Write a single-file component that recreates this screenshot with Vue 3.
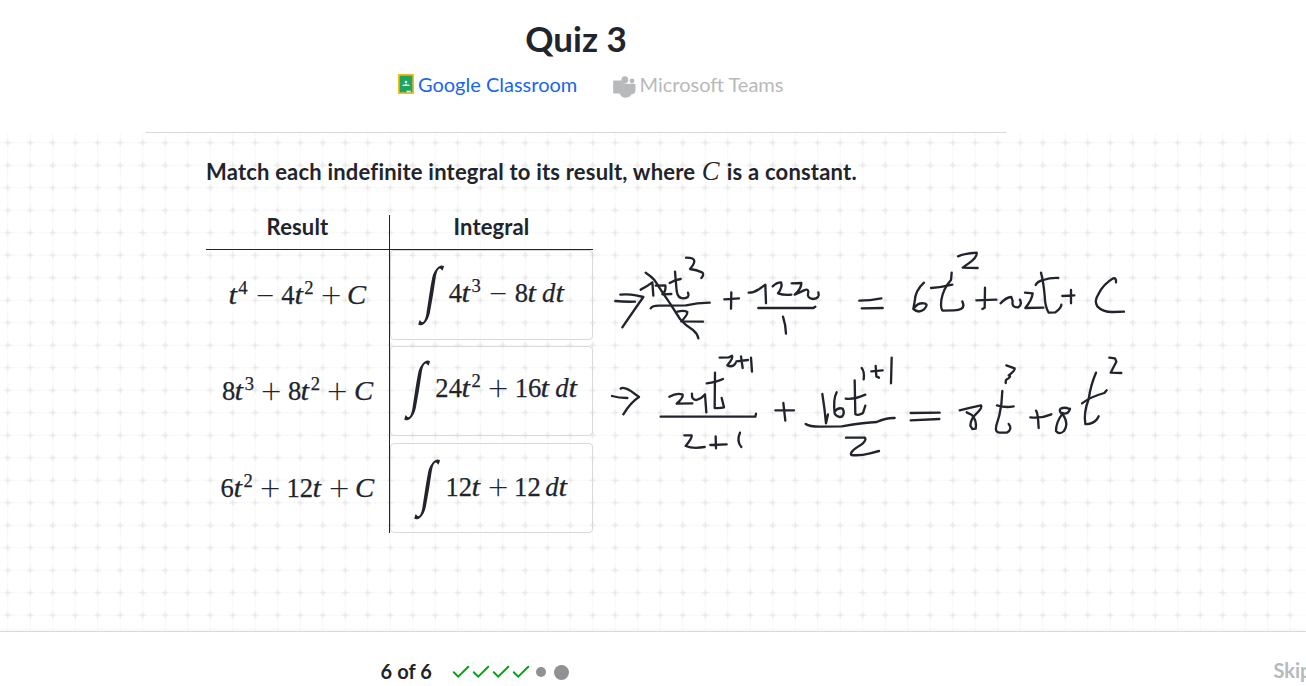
<script setup>
const n = (v) => ({ k: 'num', v })
const t = { k: 'var', v: 't' }
const d = { k: 'dee', v: 'd' }
const c = { k: 'cee', v: 'C' }
const s = (v) => ({ k: 'sup', v })
const plus = { k: 'op', v: '+' }
const minus = { k: 'op', v: '−' }
const thin = { k: 'thin', v: '' }
const int = { k: 'int', v: '∫' }

const results = [
  [t, s('4'), minus, n('4'), t, s('2'), plus, c],
  [n('8'), t, s('3'), plus, n('8'), t, s('2'), plus, c],
  [n('6'), t, s('2'), plus, n('12'), t, plus, c],
]
const integrals = [
  [int, n('4'), t, s('3'), minus, n('8'), t, thin, d, t],
  [int, n('24'), t, s('2'), plus, n('16'), t, thin, d, t],
  [int, n('12'), t, plus, n('12'), thin, d, t],
]

// Pen strokes, grouped by the area of the scratchpad they were drawn in
const ink = [
  {
    x: 600, y: 108,
    strokes: [
      'M61 164Q85 162 108 166L130 171Q104 208 67 262', 'M46 183Q75 186 105 185',
      'M122 149Q140 140 157 127L160 167', 'M137 98Q154 109 164 121Q188 159 210 190L240 237Q258 258 280 271Q293 282 295 295',
      'M167 137L196 136Q199 153 187 163L214 162', 'M225 95L230 153Q233 175 250 175Q271 174 264 158', 'M209 129Q225 119 242 117',
      'M258 53Q282 53 283 63Q282 74 270 87Q290 90 306 97Q314 102 304 114', 'M152 205Q158 196 180 197L258 196Q291 188 329 188',
      'M232 215Q252 210 262 216Q263 225 244 244L309 245', 'M394 157L393 206M373 178L417 175',
      'M446 158Q462 158 478 147L496 134L498 190', 'M518 139Q530 127 543 127Q549 141 534 160Q550 166 574 164',
      'M575 130L604 129Q605 145 584 164L612 151Q625 145 625 156Q619 175 639 177Q661 175 655 157', 'M475 204L640 204L646 200', 'M549 230Q557 254 558 281',
    ],
  },
  {
    x: 840, y: 108,
    strokes: [
      'M58 182Q90 182 124 175M65 205L128 204', 'M252 128Q226 151 224 184L220 207Q236 221 252 208Q268 192 251 190Q234 188 222 204',
      'M354 49Q371 41 410 38Q412 51 389 68L368 83L413 84', 'M335 98L333 120Q310 145 304 180Q301 209 309 212L342 211Q372 210 370 194L367 184', 'M273 144Q305 142 337 134',
      'M435 143L434 203L427 207M409 181L469 179', 'M482 190Q498 172 514 171L518 183Q514 203 535 202Q547 194 540 179', 'M555 158L578 160Q576 179 556 204L610 203',
      'M603 98Q610 124 614 166Q615 201 626 218L646 217Q664 203 664 194', 'M587 135Q591 125 610 120Q630 113 655 114', 'M693 150L693 190M667 168L703 166',
      'M828 127Q829 113 820 115Q790 132 775 163Q762 182 772 199Q789 217 820 216L852 215',
    ],
  },
  {
    x: 600, y: 213,
    strokes: [
      'M36 153Q55 159 82 159M62 131Q69 125 91 137L117 156Q92 172 70 208', 'M208 155Q232 142 248 149Q250 158 230 176L277 175', 'M276 146Q274 165 289 165Q306 160 315 148L319 202',
      'M345 83L344 189Q362 190 372 187L365 159', 'M320 115Q350 111 369 102', 'M359 38L387 37L396 32Q401 39 382 61Q398 69 407 54', 'M423 34L428 69M409 49L444 45M453 38L456 80',
      'M182 215L466 215L468 206', 'M253 271L275 271Q277 279 257 303Q278 312 314 306', 'M347 274L348 310M331 300L380 298', 'M420 263Q409 288 424 306',
      'M550 174L556 227M526 196L582 196', 'M667 147Q674 190 678 235L684 208', 'M710 142Q699 163 704 206Q714 220 727 214Q735 203 728 191Q714 186 704 200', 'M764 106L766 208Q775 213 789 204L796 182', 'M737 161Q764 164 796 149',
      'M785 69Q794 79 791 103M827 63L829 94L837 98M814 79L848 76M875 38L873 115', 'M617 237Q628 245 660 245L725 244Q797 232 830 231Q859 218 884 219', 'M738 278L795 278Q801 287 781 301Q747 321 754 330Q780 333 810 325L837 318',
    ],
  },
  {
    x: 890, y: 213,
    strokes: [
      'M62 204L149 203M62 226L148 222', 'M209 196Q240 188 273 181Q279 188 257 208Q242 222 241 242L247 252L257 251Q262 230 246 210L230 202', 'M349 61L374 70Q376 76 356 91Q367 94 348 105L347 114',
      'M337 138L334 178Q330 210 319 242Q314 262 328 263L350 263Q369 252 356 237', 'M321 181Q347 189 371 184', 'M438 197Q444 203 446 249M421 217Q454 221 484 208',
      'M538 192Q524 185 512 191Q505 196 516 208Q498 232 498 258Q508 271 522 258Q536 237 522 214L512 203Q535 212 540 191', 'M618 83Q602 120 596 162Q580 205 586 237Q606 239 620 224L626 214', 'M576 175Q600 156 643 144L650 136', 'M658 38L675 40L679 50L662 83L694 84',
    ],
  },
]
</script>

<template>
  <div class="page">
    <header class="head">
      <h1>Quiz 3</h1>
      <div class="share">
        <span class="link google">
          <svg class="gicon" viewBox="0 0 16 20">
            <rect width="16" height="20" fill="#f5ba16" />
            <rect x="1.7" y="1.7" width="12.6" height="16.6" fill="#20a464" />
            <circle cx="8" cy="8.1" r="1.3" fill="#e9f7ef" />
            <path d="M4 12q1-1.900 2.600-1.300l1.400-1 1.400 1q1.600-.6 2.600 1.300z" fill="#d9f1e4" />
            <rect x="8.700" y="16.700" width="4" height="1.600" fill="#eef3df" />
          </svg>Google Classroom
        </span>
        <span class="link teams">
          <svg class="ticon" viewBox="0 0 23 22">
            <circle cx="11.900" cy="3.700" r="3.400" />
            <circle cx="19" cy="4.800" r="2.400" />
            <path d="M1 4.600h8q1.200 3.200 4.800 3.200h7.500q1.200 0 1.200 1.200v5.500q0 3.500-4.300 4-1.700 3.300-5.900 3.300-3.800 0-5.700-4.200H1q-.8 0-.8-.8V5.400q0-.8.8-.8z" />
          </svg>Microsoft Teams
        </span>
      </div>
    </header>

    <main class="work">
      <svg class="grid" width="1306" height="499">
        <defs>
          <pattern id="dots" width="22.5" height="22.500" patternUnits="userSpaceOnUse" patternTransform="translate(-3.500 -.5)">
            <path d="M11.250 0V22.500M0 11.250H22.500" stroke="#f3f3f3" stroke-width="1" stroke-dasharray="1.500 1" fill="none" />
            <path d="M11.250 8.200v6.100M8.200 11.250h6.100" stroke="#e7e7e7" stroke-width="1.500" />
          </pattern>
        </defs>
        <rect width="1306" height="499" fill="url(#dots)" />
      </svg>
      <div class="rule"></div>
      <section class="exercise">
        <p class="prompt">Match each indefinite integral to its result, where <i class="bigc">C</i> is a constant.</p>
        <div class="match">
          <div class="col left">
            <h2>Result</h2>
            <div v-for="(row, i) in results" :key="i" class="result">
              <span class="math"><span v-for="(p, j) in row" :key="j" :class="p.k">{{ p.v }}</span></span>
            </div>
          </div>
          <div class="col right">
            <h2>Integral</h2>
            <div v-for="(row, i) in integrals" :key="i" class="card">
              <span class="math"><span v-for="(p, j) in row" :key="j" :class="p.k">{{ p.v }}</span></span>
            </div>
          </div>
        </div>
      </section>
      <svg class="ink" width="1306" height="499">
        <g v-for="(g, i) in ink" :key="i" :transform="`translate(${g.x} ${g.y}) scale(.33333)`">
          <path v-for="(p, j) in g.strokes" :key="j" :d="p" />
        </g>
      </svg>
    </main>

    <footer class="foot">
      <b class="count">6 of 6</b>
      <div class="steps">
        <svg v-for="k in 4" :key="k" class="tick" viewBox="0 0 20 16"><path d="M2.800 8.200L7.200 12.600L17.300 2.800" /></svg>
        <span class="dot"></span>
        <span class="dot big"></span>
      </div>
      <span class="skip">Skip</span>
    </footer>
  </div>
</template>

<style>
body { overflow: hidden; background: #fff; }
</style>

<style scoped>
.page { width: 1306px; height: 686px; display: flex; flex-direction: column; overflow: hidden; font-family: Lato, "Liberation Sans", sans-serif; color: #21242c; background: #fff; }
.head { height: 132px; flex: none; }
h1 { margin: 0; padding-top: 16px; width: 1152px; text-align: center; font-size: 35px; line-height: 44px; font-weight: 700; }
.share { display: flex; gap: 35px; padding: 13px 0 0 398px; font-size: 20px; line-height: 22px; white-space: nowrap; }
.link { display: flex; }
.google { color: #1865f2; width: 180px; }
.teams { color: #b8b9bb; }
.gicon { width: 16px; height: 20px; margin: 1px 4px 0 0; flex: none; }
.ticon { width: 23px; height: 22px; margin: 3px 3.500px 0 0; fill: #b8b9bb; flex: none; }
.work { position: relative; height: 499px; flex: none; }
.grid, .ink { position: absolute; left: 0; top: 0; display: block; }
.ink path { fill: none; stroke: #21242c; stroke-width: 7; stroke-linecap: round; stroke-linejoin: round; }
.rule { position: relative; height: 1px; width: 860px; margin-left: 146px; background: #d8d9db; }
.exercise { position: relative; padding: 23px 0 0 206px; }
.prompt { margin: 0; height: 32px; line-height: 32px; font-size: 22px; font-weight: 700; white-space: nowrap; letter-spacing: .2px; font-variant-ligatures: common-ligatures; }
.bigc { font: italic 400 26.600px/20px "Liberation Serif", serif; display: inline-block; width: 19.500px; margin-left: 1px; }
.match { display: flex; width: 387px; margin-top: 27px; }
.col h2 { margin: 0; height: 34px; line-height: 23px; font-size: 22px; font-weight: 700; text-align: center; border-bottom: 1px solid #21242c; letter-spacing: .15px; }
.left { width: 183px; border-right: 1px solid #21242c; }
.right { width: 203px; }
.result, .card { height: 90px; margin-bottom: 6px; display: flex; justify-content: center; align-items: center; box-sizing: border-box; }
.result { padding-top: 1px; padding-left: 1px; }
.card { border: 1px solid #d8d9db; border-radius: 4px; padding-bottom: 14px; padding-left: 4px; }
.card:nth-child(2) { padding-bottom: 12px; }
.result:nth-child(3), .card:nth-child(3) { margin-bottom: 7px; }
.result:last-child, .card:last-child { margin-bottom: 0; }
.math { display: flex; align-items: baseline; font: 26.600px/32px "Liberation Serif", serif; white-space: nowrap; -webkit-text-stroke: .25px #21242c; }
.math > span { flex: none; }
.var { width: .361em; font-style: italic; transform: scaleX(1.15); transform-origin: 30% 50%; }
.dee { width: .52em; font-style: italic; }
.cee { width: .76em; font-style: italic; transform: scaleX(1.08); transform-origin: 0 50%; }
.sup { font-size: .7em; width: .57em; position: relative; top: -.52em; }
.op { width: 1.222em; text-align: center; font-family: Lato, sans-serif; font-weight: 300; transform: translateY(2px) scale(1.35); transform-origin: 50% 65%; -webkit-text-stroke: 0; }
.thin { width: .167em; }
.int { font-size: 61px; line-height: 32px; width: 27px; transform: translate(.5px, 7px) skewX(-9deg) scaleX(.72); transform-origin: 50% 50%; -webkit-text-stroke: 0; }
.foot { height: 54px; border-top: 1px solid #d8d9db; background: #fff; position: relative; display: flex; align-items: center; padding-left: 380.500px; box-shadow: 0 -1px 4px rgba(33, 36, 44, .05); box-sizing: content-box; }
.count { font-size: 20px; line-height: 26px; width: 70.500px; position: relative; top: 12px; white-space: nowrap; letter-spacing: .1px; }
.steps { display: flex; align-items: center; position: relative; top: 13px; }
.tick { width: 20px; height: 16px; display: block; }
.tick path { fill: none; stroke: #00a60e; stroke-width: 2; stroke-linecap: round; }
.dot { width: 10px; height: 10px; border-radius: 50%; background: #909195; margin-left: 5px; }
.big { width: 15px; height: 15px; margin-left: 8px; }
.skip { position: absolute; left: 1273.500px; top: 25px; font-size: 20px; line-height: 26px; font-weight: 700; color: #b8b9bb; }
</style>
